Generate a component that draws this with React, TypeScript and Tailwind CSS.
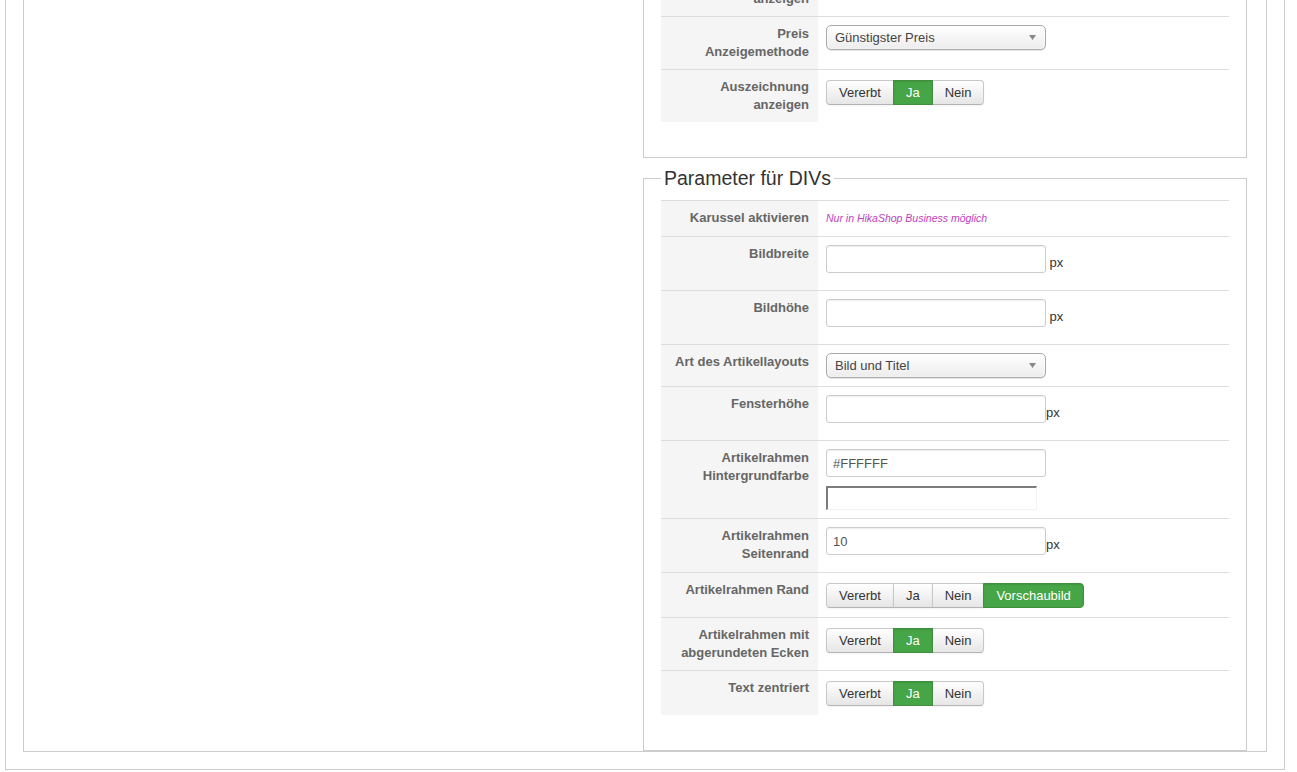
import React from "react";

type Row = {
  label: string;
  kind: "toggle" | "select" | "input" | "note" | "color" | "blank";
  options?: string[];
  active?: number;
  value?: string;
  px?: "space" | "tight";
};

const topRows: Row[] = [
  { label: "Beschreibung anzeigen", kind: "blank" },
  { label: "Preis Anzeigemethode", kind: "select", value: "Günstigster Preis" },
  { label: "Auszeichnung anzeigen", kind: "toggle", options: ["Vererbt", "Ja", "Nein"], active: 1 },
];

const divRows: Row[] = [
  { label: "Karussel aktivieren", kind: "note", value: "Nur in HikaShop Business möglich" },
  { label: "Bildbreite", kind: "input", value: "", px: "space" },
  { label: "Bildhöhe", kind: "input", value: "", px: "space" },
  { label: "Art des Artikellayouts", kind: "select", value: "Bild und Titel" },
  { label: "Fensterhöhe", kind: "input", value: "", px: "tight" },
  { label: "Artikelrahmen Hintergrundfarbe", kind: "color", value: "#FFFFFF" },
  { label: "Artikelrahmen Seitenrand", kind: "input", value: "10", px: "tight" },
  { label: "Artikelrahmen Rand", kind: "toggle", options: ["Vererbt", "Ja", "Nein", "Vorschaubild"], active: 3 },
  { label: "Artikelrahmen mit abgerundeten Ecken", kind: "toggle", options: ["Vererbt", "Ja", "Nein"], active: 1 },
  { label: "Text zentriert", kind: "toggle", options: ["Vererbt", "Ja", "Nein"], active: 1 },
];

function Toggle({ options, active }: { options: string[]; active: number }) {
  return (
    <div className="flex pt-[2px] pb-px">
      {options.map((o, i) => {
        const first = i === 0;
        const last = i === options.length - 1;
        const on = i === active;
        return (
          <button
            key={o}
            type="button"
            className={[
              "h-[25px] border px-3 text-[13px] leading-[23px]",
              first ? "rounded-l-[4px]" : "-ml-px",
              last ? "rounded-r-[4px]" : "",
              on
                ? "relative border-[#3f8f3f] bg-[#46a546] text-white shadow-[inset_0_1px_2px_rgba(0,0,0,0.1)]"
                : "border-[#c8c8c8] border-b-[#b3b3b3] bg-linear-to-b from-white to-[#e6e6e6] text-[#333] shadow-[0_1px_2px_rgba(0,0,0,0.05)]",
            ].join(" ")}
          >
            {o}
          </button>
        );
      })}
    </div>
  );
}

function Select({ value }: { value: string }) {
  return (
    <div className="flex h-[25px] w-[220px] items-center justify-between rounded-[5px] border border-[#aaa] bg-linear-to-b from-white via-[#f6f6f6] to-[#ececec] pl-2 pr-[9px] text-[13px] text-[#444] shadow-[inset_0_0_3px_white,0_1px_1px_rgba(0,0,0,0.1)]">
      <span>{value}</span>
      <svg width="7" height="5" viewBox="0 0 7 5">
        <path d="M0 0h7L3.5 5z" fill="#888" />
      </svg>
    </div>
  );
}

function TextInput({ value }: { value: string }) {
  return (
    <input
      readOnly
      value={value}
      className="mb-[9px] inline-block h-[28px] w-[220px] rounded-[3px] border border-[#ccc] bg-white px-[6px] text-[13px] text-[#555] shadow-[inset_0_1px_1px_rgba(0,0,0,0.075)] outline-none"
    />
  );
}

function Value({ row }: { row: Row }) {
  switch (row.kind) {
    case "toggle":
      return <Toggle options={row.options!} active={row.active!} />;
    case "select":
      return <Select value={row.value!} />;
    case "note":
      return <div className="text-[10.5px] italic leading-[19px] text-[#c040c0]">{row.value}</div>;
    case "input":
      return (
        <div className="text-[13px] leading-[18px] text-[#333]">
          <TextInput value={row.value!} />
          <span className="relative top-[3px]">{row.px === "space" ? " px" : "px"}</span>
        </div>
      );
    case "color":
      return (
        <div>
          <TextInput value={row.value!} />
          <div className="h-[24px] w-[211px] border-t-2 border-r border-b border-l-2 border-t-[#7c7c7c] border-l-[#7c7c7c] border-r-[#f2f2f2] border-b-[#f2f2f2] bg-white" />
        </div>
      );
    default:
      return null;
  }
}

function ParamTable({ rows }: { rows: Row[] }) {
  return (
    <table className="w-full border-collapse">
      <tbody>
        {rows.map((r) => (
          <tr key={r.label}>
            <td className="w-[157px] border-t border-[#ddd] bg-[#f5f5f5] py-2 pl-[13px] pr-[9px] text-right align-top text-[13px] font-bold leading-[18px] text-[#666]">
              {r.label}
            </td>
            <td className="border-t border-[#ddd] p-2 align-top text-[13px] leading-[18px]">
              <Value row={r} />
            </td>
          </tr>
        ))}
      </tbody>
    </table>
  );
}

export default function App() {
  return (
    <div className="h-[772px] w-[1297px] overflow-hidden bg-white font-['Liberation_Sans',Arial,sans-serif]">
      <div className="-mt-[39px]">
        <div className="ml-[5px] w-[1280px] border border-[#ccc] px-[17px] pb-[17px]">
          <div className="flex border border-[#ccc]">
            <div className="w-[619px] shrink-0" />
            <div className="w-[604px] shrink-0">
              <div className="border border-t-0 border-[#ccc] px-[17px] pb-[35px]">
                <ParamTable rows={topRows} />
              </div>
              <fieldset className="mt-[8px] border border-[#ccc] px-[17px] pt-[10px] pb-[35px]">
                <legend className="ml-0 px-[3px] text-[19.5px] leading-[24px] text-[#333]">Parameter für DIVs</legend>
                <ParamTable rows={divRows} />
              </fieldset>
            </div>
          </div>
        </div>
      </div>
    </div>
  );
}
